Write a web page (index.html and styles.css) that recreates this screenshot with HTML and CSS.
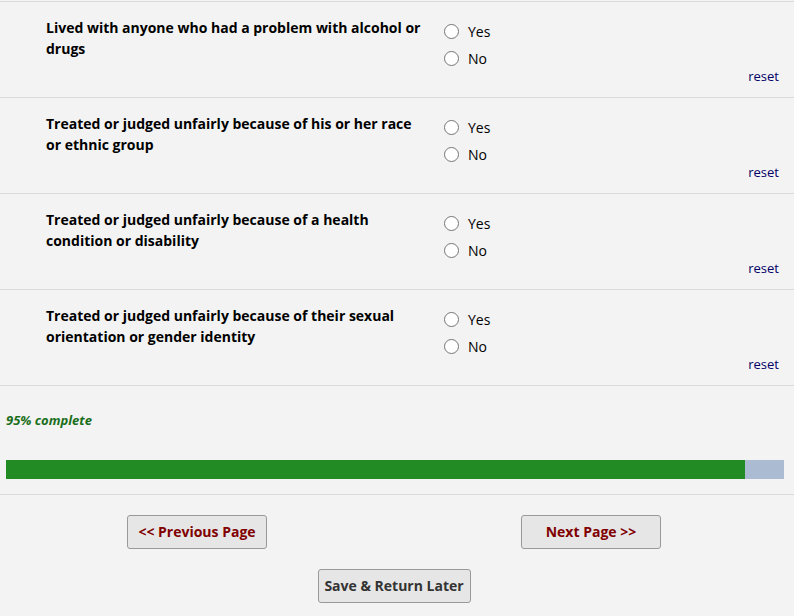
FILE: index.html
```html
<!DOCTYPE html>
<html>
<head>
<meta charset="utf-8">
<link rel="stylesheet" href="styles.css">
</head>
<body>
<div class="survey">
  <div class="row">
    <div class="question">Lived with anyone who had a problem with alcohol or drugs</div>
    <div class="answers">
      <label class="opt"><input type="radio" name="q1"><span>Yes</span></label>
      <label class="opt"><input type="radio" name="q1"><span>No</span></label>
      <a class="reset" href="#">reset</a>
    </div>
  </div>
  <div class="row">
    <div class="question">Treated or judged unfairly because of his or her race or ethnic group</div>
    <div class="answers">
      <label class="opt"><input type="radio" name="q2"><span>Yes</span></label>
      <label class="opt"><input type="radio" name="q2"><span>No</span></label>
      <a class="reset" href="#">reset</a>
    </div>
  </div>
  <div class="row">
    <div class="question">Treated or judged unfairly because of a health condition or disability</div>
    <div class="answers">
      <label class="opt"><input type="radio" name="q3"><span>Yes</span></label>
      <label class="opt"><input type="radio" name="q3"><span>No</span></label>
      <a class="reset" href="#">reset</a>
    </div>
  </div>
  <div class="row">
    <div class="question">Treated or judged unfairly because of their sexual orientation or gender identity</div>
    <div class="answers">
      <label class="opt"><input type="radio" name="q4"><span>Yes</span></label>
      <label class="opt"><input type="radio" name="q4"><span>No</span></label>
      <a class="reset" href="#">reset</a>
    </div>
  </div>
  <div class="progress-section">
    <div class="progress-label">95% complete</div>
    <div class="progress-track"><div class="progress-fill" style="width:95%"></div></div>
  </div>
  <div class="nav">
    <div class="nav-pair">
      <button class="btn btn-nav">&lt;&lt; Previous Page</button>
      <button class="btn btn-nav">Next Page &gt;&gt;</button>
    </div>
    <div class="nav-save">
      <button class="btn btn-save">Save &amp; Return Later</button>
    </div>
  </div>
</div>
</body>
</html>
```

FILE: styles.css
```css
html, body {
  margin: 0;
  padding: 0;
  background: #f3f3f3;
  font-family: "Open Sans", "Liberation Sans", sans-serif;
}
.survey {
  padding-top: 1px;
}
.row {
  display: grid;
  grid-template-columns: 382px 1fr;
  column-gap: 16px;
  border-top: 1px solid #dcdcdc;
  height: 95px;
  box-sizing: content-box;
  padding-left: 46px;
  padding-right: 15px;
}
.question {
  font-size: 14px;
  font-weight: bold;
  line-height: 21px;
  color: #000;
  padding-top: 15px;
}
.answers {
  display: flex;
  flex-direction: column;
  padding-top: 16px;
}
.opt {
  display: flex;
  align-items: center;
  height: 27px;
  font-size: 14px;
  color: #000;
}
.opt input {
  appearance: none;
  -webkit-appearance: none;
  width: 15px;
  height: 15px;
  margin: 0 9px 0 0;
  border: 1px solid #767676;
  border-radius: 50%;
  background: #fff;
  box-sizing: border-box;
}
.reset {
  align-self: flex-end;
  font-size: 13px;
  line-height: 18px;
  color: #000066;
  text-decoration: none;
  margin-top: -5px;
}
.progress-section {
  border-top: 1px solid #dcdcdc;
  border-bottom: 1px solid #dcdcdc;
  padding: 25px 10px 15px 6px;
}
.progress-label {
  font-size: 13px;
  font-weight: bold;
  font-style: italic;
  color: #1b6e1b;
  line-height: 18px;
}
.progress-track {
  margin-top: 31px;
  height: 19px;
  background: #abbbd2;
}
.progress-fill {
  height: 100%;
  background: #238b23;
}
.nav {
  padding: 20px 6px 0 0;
}
.nav-pair {
  display: grid;
  grid-template-columns: 1fr 1fr;
  justify-items: center;
}
.nav-save {
  display: flex;
  justify-content: center;
  margin-top: 20px;
}
.btn {
  font-family: "Open Sans", "Liberation Sans", sans-serif;
  font-size: 14px;
  font-weight: bold;
  line-height: 20px;
  background: #e6e6e6;
  border: 1px solid #999;
  border-radius: 3px;
  height: 34px;
  box-sizing: border-box;
  padding: 6px 0;
}
.btn-nav {
  width: 140px;
  color: #800000;
}
.btn-save {
  width: 153px;
  color: #333;
}
```
